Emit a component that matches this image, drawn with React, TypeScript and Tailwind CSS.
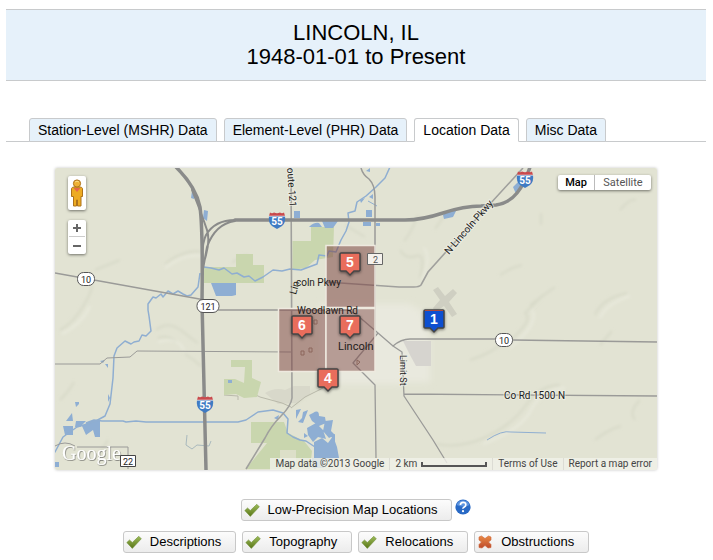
import React from "react";

const tabs = ["Station-Level (MSHR) Data", "Element-Level (PHR) Data", "Location Data", "Misc Data"];

const pins = [
  { label: "5", x: 350, y: 253 },
  { label: "6", x: 302, y: 316 },
  { label: "7", x: 350, y: 316 },
  { label: "4", x: 328, y: 369 },
];

const interstates = [
  { x: 277, y: 221 },
  { x: 525, y: 180 },
  { x: 205, y: 405 },
];

const routes = [
  { label: "10", x: 86, y: 279, w: 17 },
  { label: "121", x: 208, y: 306, w: 22 },
  { label: "10", x: 504, y: 340, w: 17 },
];

function Tick() {
  return (
    <svg viewBox="0 0 16 16" className="size-4 shrink-0" aria-hidden="true">
      <defs>
        <linearGradient id="tick" x1="0" y1="0" x2="0" y2="1">
          <stop offset="0" stopColor="#9dbb59" />
          <stop offset="1" stopColor="#5a7717" />
        </linearGradient>
      </defs>
      <path d="M.8 8.600 3.500 6l2.800 2.500 6.500-6.200 2.500 2.500L6.300 14.400Z" fill="url(#tick)" stroke="#71903a" strokeWidth=".6" />
    </svg>
  );
}

function Cross() {
  return (
    <svg viewBox="0 0 16 16" className="size-4 shrink-0" aria-hidden="true">
      <defs>
        <linearGradient id="cross" x1="0" y1="0" x2="0" y2="1">
          <stop offset="0" stopColor="#ea8b45" />
          <stop offset="1" stopColor="#bd4a2c" />
        </linearGradient>
      </defs>
      <path
        d="M2 3 4.500 2 8 4.500 11.500 2 14 3v3L11.500 8l2.500 2.500v3l-3 .5-3-2.500L5 14l-3-.5v-3L4.500 8 2 6Z"
        fill="url(#cross)"
        stroke="#cc6337"
        strokeWidth=".6"
      />
    </svg>
  );
}

function LayerButton({ label, on = true }: { label: string; on?: boolean }) {
  return (
    <button
      type="button"
      aria-pressed={on}
      className="flex h-[22px] items-center gap-2 rounded-[3px] border border-[#c8c8c8] bg-gradient-to-b from-[#fcfcfc] to-[#ececec] pr-[14px] pl-[2px] text-[13px] leading-5 whitespace-nowrap text-black"
    >
      {on ? <Tick /> : <Cross />}
      {label}
    </button>
  );
}

function Shield({ x, y }: { x: number; y: number }) {
  return (
    <g transform={`translate(${x} ${y})`}>
      <path d="M-7-8.500Q-5-7-3-8.500 0-7 3-8.500 5-7 7-8.500L8-5H-8Z" fill="#c94a4d" />
      <path d="M-8-5H8Q9 2 5 5L0 8-5 5Q-9 2-8-5Z" fill="#3f7bc3" />
      <path d="M-8-4.800H8" stroke="#f4eded" strokeWidth=".8" />
      <text y="4" textAnchor="middle" fontSize="10" fontWeight="700" fill="#fff">
        55
      </text>
    </g>
  );
}

function Pin({ x, y, label, color }: { x: number; y: number; label: string; color: string }) {
  return (
    <g transform={`translate(${x} ${y})`}>
      <path
        d="M-9 0H9Q10 0 10 1V17Q10 18 9 18H4L0 22-4 18H-9Q-10 18-10 17V1Q-10 0-9 0Z"
        fill={color}
        stroke="#454545"
        strokeWidth="1.500"
        filter="url(#pinShadow)"
      />
      <text
        y="14"
        textAnchor="middle"
        fontSize="14"
        fontWeight="700"
        fill="#fff"
        className="font-['Liberation_Sans',sans-serif]"
      >
        {label}
      </text>
    </g>
  );
}

function MapDrawing() {
  return (
    <svg
      viewBox="55 168 602 302"
      preserveAspectRatio="xMidYMid slice"
      className="block h-full w-full font-[Roboto,sans-serif]"
      role="img"
      aria-label="Map of station locations around Lincoln"
    >
      <defs>
        <filter id="soft">
          <feGaussianBlur stdDeviation="1.500" />
        </filter>
        <filter id="city" x="-20%" y="-20%" width="140%" height="140%">
          <feGaussianBlur stdDeviation="3" />
        </filter>
        <filter id="pinShadow" x="-30%" y="-30%" width="160%" height="160%">
          <feDropShadow dx="0" dy="1" stdDeviation="1.500" floodColor="#000" floodOpacity=".5" />
        </filter>
        <filter id="logoShadow" x="-20%" y="-20%" width="140%" height="150%">
          <feDropShadow dx=".6" dy=".8" stdDeviation=".7" floodColor="#444" floodOpacity=".7" />
        </filter>
      </defs>
      <rect x="55" y="168" width="602" height="302" fill="#e2e3d3" />

      {/* terrain */}
      <g fill="none" stroke="#d7d9c8" strokeWidth="2" filter="url(#soft)">
        <path d="M165 264q10-8 20-11t16-1M60 330q12-6 22-22t10-22M156 330q12-10 26 1t16 12M158 338q10-3 18 4M60 400q10-10 14-18M108 440l-9 14" />
        <path d="M185 354q8 5 16 12M400 250q6 10 16 6t4 22M418 215q-8 20-14 26M505 345q30-25 20-32l18-18" />
        <path d="M595 315q6-16 32-22M620 210q10-12 16-10M500 275q12-8 22-10M530 305l25-18M560 385q-20 0-34 20t-40 32-50 7M470 360q25-8 35-20" />
        <path d="M595 440q12-10 26-14M640 400q-12 12-5 20M600 345l12-14M541 225v-12M345 225l20 12M320 385l-26 20M232 263q8-7 16-8M120 260l-25 10M445 215l-10 14" />
      </g>
      <g fill="none" stroke="#e9eadd" strokeWidth="2" filter="url(#soft)">
        <path d="M165 268q20-15 38-12M158 342q20-6 26 8M424 248q8 10-2 32M510 348q30-25 22-38M565 388q-24 2-34 22t-48 34M62 334q20-10 28-28M630 296q-24 8-30 22" />
      </g>
      <g filter="url(#city)">
        <path d="M320 304H412V375L400 384H340L320 375Z" fill="#e9e9de" />
        <path d="M375 308H420L430 340V382H375Z" fill="#e9e9de" />
      </g>
      <path d="M403 341H431V366H416L410 355Z" fill="#d6d4cf" />
      <path d="M433 290l5-3 7 9 8-7 4 4-8 9 8 12-5 3-8-11-9 6-2-4 7-8Z" fill="#cfcfc2" />
      <path d="M265 393q10-6 20-3l9-4h16v8l-14 9-18 1Z" fill="#d8d8ca" />
      <path d="M240 391l10 1 10 5 22 6 9 4M291 408l14-11 22-11M224 395l14 1v4" fill="none" stroke="#b9b9aa" strokeWidth="1" />

      {/* parks */}
      <path
        d="M292.500 241h18.500v-14h23l-1 30-18 3-9 8-13.500 2ZM204 267h32v-13h17v11h11v18h-60ZM231 360h21v18l9 4-4 15-13 1-8-4-12 1v-16h11l9 4 1-16h-14ZM251 422h33l4 11 16 8 8 10-2 18h-64l21-26h-16Z"
        fill="#c9d6ae"
      />
      <path d="M280 450h16v12h-16Z" fill="#dcdfc8" />

      {/* water */}
      <g fill="#8eaed3">
        <path d="M211 283h25v12l-4 1h-16ZM294 211h6v7h-6ZM309 227q5-5 10-4l3 4h-12ZM322 221h16l-5 7h-8ZM204 210l4 1-1 10-4-3ZM366 210h6v7h-6ZM363 222h8v4h-8ZM376 223h4v3h-4ZM443 215l4-4h9l-3 6-9 2ZM366 171l4-3v4ZM369 197l4-3v5ZM360 200l5-2-4 5ZM192 191l3 1-1 7-3-1ZM513 187l6-6 3 5-6 8Z" />
        <path d="M66 421l6-8 1 8ZM63 426h10v9h-8ZM76 421h10l-6 6h-5ZM82 426l8-5h10v16h-5l-2-7-7 5ZM75 402h4v2l-3 3ZM108 394l2 4-2 4ZM100 361l5-1-2 3ZM105 364h3v4ZM55 462h4v5h-4Z" />
        <path d="M313 413q6-4 6 3l6 1 1 6-7 3-7-5-3-6ZM325 421l8-1-2 11 4 4-6 3-6-7ZM303 412l5-2-5 13-5-1 4-4ZM307 428l9-5 7 7 3 9-8-2-5 5-5-7ZM314 442l8-4 6 5 5-7 4 11 2 11-9 1h-16ZM296 410l5-1-5 10ZM274 418l5-3-1 5ZM304 433l4 3-4 2ZM331 436l4-2v9ZM312 458h12v10h-12ZM228 380h4v3h-4ZM220 288h6v2h-6Z" />
      </g>
      <g fill="none" stroke="#8faed1" strokeWidth="1.500" strokeLinejoin="round">
        <path d="M204 267l7 1 8 2 5-2 8 6 5-1 7 4 5-1 6 5 8-4 10-7 9 1 8-2 11 1 8-3 8-3 2-9 8 1 2-5 7 1 5-12 5-9 3-9-1-9 7-2 2-9 9-6 10-9 9-9 5-11" />
        <path d="M200 273l-2 14-7 8-4 1-4-2-5-3-5 3-5-3-5 6-2-3-5 4-3-1-5 7v6l1 6 2 15-5 5-4-1-3 6-5 1-3 2-6-3-8 7-3 8-1 22-3 26-5 12-11 6-17 5-14 10-8 15-17 8" />
        <path d="M86 423l8-3 8 1h21l3 1 10-1 10 1h92l8-2 12-8 15-2 10 3 5 6-1 14 6 4 7 3 6 1 9 6v22" />
        <path d="M487 440q15-10 24-8l35 1M368 201l9 5" strokeWidth="1" />
        <path d="M187 435l-1 10 6 4 5-4 12 1 2-5" strokeWidth="1" stroke="#a9b9bd" />
      </g>

      {/* roads */}
      <g fill="none" stroke="#9a9a98" strokeWidth="1.300" strokeLinejoin="round">
        <path d="M55 273l150 27M218 310h130l9 5 21 18 15 13q8-7 17-7h85M512 340l145 2" />
        <path d="M393 346l9 6 2 44 29 44 14 23M404 394l253 2M378 333l-25 30 22 22 1 73" />
        <path d="M55 364h45l7-6 23-1 7-6 154 1M77 447h51v22M55 446q10-6 20 0" strokeWidth="1" />
        <path d="M361 168q2 7 8 11 6 6 6 18v50M375 247v90" strokeWidth="1.500" />
      </g>
      <g fill="none" stroke="#a0a09d" strokeWidth="1.600">
        <path d="M291 168l1 230q-1 8-11 18t-16 22l-19 31" />
        <path d="M523 168l-78 85-17 19-7 13q-2 2-7 2h-15l-73-5" />
      </g>
      <g fill="none" stroke="#8a8b8a" strokeLinecap="round">
        <path d="M176 167q20 20 24 40 3 23 2 95l4 168" strokeWidth="3.500" />
        <path d="M192 190q10 25 15 40 4 12-4 35M360 220H235q-20 0-29 15-4 8-4 26M235 221q-20 3-28 26l-4 22" strokeWidth="2" />
        <path d="M235 220h170q17 0 38-7t38-7l15-1q13-2 21-12t13-26" strokeWidth="3.500" />
      </g>

      {/* low-precision areas */}
      <g stroke="#eee9df" strokeWidth="1.500" fill="#7b4240">
        <path d="M326 245.500h49V307.500h-49Z" fillOpacity=".52" />
        <path d="M278.500 308.500H326V371.500H278.500Z" fillOpacity=".5" />
        <path d="M326 308.500h49V371.500h-49Z" fillOpacity=".46" />
      </g>
      <path d="M301 351h3v4h-3ZM309 348h3v4h-3ZM314 320h3v4h-3ZM357 360l3 2-3 3Z" fill="none" stroke="#8c665c" />

      {/* shields */}
      {interstates.map((s) => (
        <Shield key={s.x} x={s.x} y={s.y} />
      ))}
      {routes.map((r) => (
        <g key={r.x}>
          <rect x={r.x - r.w / 2} y={r.y - 6.5} width={r.w} height="13" rx="6" fill="#fff" stroke="#555" />
          <text x={r.x} y={r.y + 3.5} textAnchor="middle" fontSize="9" fill="#222">
            {r.label}
          </text>
        </g>
      ))}
      <path d="M120.500 455.500h15v11h-15Z" fill="#fff" stroke="#444" />
      <text x="128" y="464.500" textAnchor="middle" fontSize="9" fill="#222">
        22
      </text>
      <path d="M367.500 253.500h15v11h-15Z" fill="#f4f1ec" stroke="#666" />
      <text x="375.500" y="262.500" textAnchor="middle" fontSize="9" fill="#555">
        2
      </text>

      {/* place names */}
      <g fill="#222" stroke="#f1f1e8" strokeWidth="2" strokeOpacity=".7" paintOrder="stroke" fontSize="10">
        <text transform="translate(287 168) rotate(86)">oute 121</text>
        <text transform="translate(449 255) rotate(-49)">N Lincoln Pkwy</text>
        <text transform="translate(400 355) rotate(90)">
          <tspan fontSize="9">Limit St</tspan>
        </text>
        <text x="504" y="399">
          Co Rd 1500 N
        </text>
      </g>
      <g fill="#241d1b" fontSize="10">
        <text x="296" y="286">
          coln Pkwy
        </text>
        <text transform="translate(296 295) rotate(-75)">Lin</text>
        <text x="297" y="314">
          Woodlawn Rd
        </text>
        <text x="338" y="350" fontSize="11">
          Lincoln
        </text>
      </g>

      {pins.map((p) => (
        <Pin key={p.label} x={p.x} y={p.y} label={p.label} color="#e96d5c" />
      ))}
      <Pin x={434} y={310} label="1" color="#0a4fd0" />
      <path d="M425 310.500h18" stroke="#a94b3c" />

      <text
        x="62"
        y="460"
        fontSize="20"
        fill="#fff"
        filter="url(#logoShadow)"
        className="font-['Liberation_Serif',serif]"
      >
        Google
      </text>
    </svg>
  );
}

function Pegman() {
  return (
    <svg viewBox="0 0 14 28" className="h-7 w-[14px]" aria-hidden="true">
      <path
        d="M1.500 9.500Q2 8 4 8h6q2 0 2.500 1.500v8H11V27H7.500v-6h-1v6H3.500v-9.500h-2Z"
        fill="#edab22"
        stroke="#ad721b"
      />
      <path d="M3.500 9h7L7 13Z" fill="#e6684a" />
      <circle cx="7" cy="4.500" r="3.600" fill="#efb133" stroke="#ad721b" />
      <path d="M5 3q2-1.500 4 0" stroke="#fbdc80" fill="none" />
    </svg>
  );
}

const panel = "rounded-[2px] bg-white shadow-[0_1px_3px_rgba(0,0,0,0.5)]";

export default function App() {
  return (
    <div className="bg-white pt-[9px] pr-[7px] pl-[6px] font-['Liberation_Sans',Arial,sans-serif] text-black">
      <header className="border-y border-[#c8cacc] bg-[#e6f1fa] pt-[11px] pb-[11px] text-center">
        <h1 className="text-[22px] leading-6">
          LINCOLN, IL
          <br />
          1948-01-01 to Present
        </h1>
      </header>

      <nav className="mt-[37px] flex gap-[7px] border-b border-[#c8cacc] pl-[23px]" role="tablist">
        {tabs.map((tab) => (
          <button
            key={tab}
            type="button"
            role="tab"
            aria-selected={tab === "Location Data"}
            className="-mb-px h-6 rounded-t-[3px] border border-[#c8cacc] bg-[#e6f1fa] px-2 text-[14px] leading-[22px] whitespace-nowrap aria-selected:border-b-white aria-selected:bg-white"
          >
            {tab}
          </button>
        ))}
      </nav>

      <main>
        <section className="relative mx-[49px] mt-[26px] h-[302px] overflow-hidden rounded-[2px] font-[Roboto,sans-serif] shadow-[0_0_3px_rgba(0,0,0,0.25)]">
          <MapDrawing />

          <div className="absolute top-2 left-[13px] flex flex-col gap-[10px]">
            <button type="button" aria-label="Street View" className={`flex h-[34px] w-[18px] items-center justify-center ${panel}`}>
              <Pegman />
            </button>
            <div className={`flex w-[18px] flex-col items-stretch px-px ${panel}`}>
              <button type="button" aria-label="Zoom in" className="flex h-[17px] items-center justify-center border-b border-[#ccc]">
                <svg viewBox="0 0 8 8" className="size-2" aria-hidden="true">
                  <path d="M0 4h8M4 0v8" stroke="#666" strokeWidth="2" />
                </svg>
              </button>
              <button type="button" aria-label="Zoom out" className="flex h-[17px] items-center justify-center">
                <svg viewBox="0 0 8 8" className="size-2" aria-hidden="true">
                  <path d="M0 4h8" stroke="#666" strokeWidth="2" />
                </svg>
              </button>
            </div>
          </div>

          <div className={`absolute top-[7px] right-[6px] flex text-[11px] leading-[15px] ${panel}`}>
            <button type="button" className="w-[37px] border-r border-[#bbb] font-medium text-black">
              Map
            </button>
            <button type="button" className="w-14 text-[#555]">
              Satellite
            </button>
          </div>

          <footer className="absolute right-0 bottom-0 flex h-3 items-center bg-[#f1f1ea]/80 text-[10px] leading-3 whitespace-nowrap text-[#444]">
            <span className="px-[5px]">Map data ©2013 Google</span>
            <span className="flex items-center gap-1 border-l border-[#dcdcd4] px-[5px]">
              2 km
              <span className="h-[5px] w-[66px] border-2 border-t-0 border-[#555]" />
            </span>
            <a href="#terms" className="border-l border-[#dcdcd4] px-[5px]">
              Terms of Use
            </a>
            <a href="#report" className="border-l border-[#dcdcd4] px-[5px]">
              Report a map error
            </a>
          </footer>
        </section>

        <section className="mt-[29px] flex flex-col items-center gap-[10px]">
          <div className="flex items-start gap-[3px]">
            <LayerButton label="Low-Precision Map Locations" />
            <button type="button" aria-label="Help">
              <svg viewBox="0 0 16 16" className="size-4" aria-hidden="true">
                <circle cx="8" cy="8" r="7.600" fill="#2869c5" />
                <path d="M1.500 6a7 7 0 0 1 13 0Q9 9 1.500 6Z" fill="#5c94df" />
                <path d="M5.400 6q0-2.700 2.700-2.700t2.700 2.400q0 1.500-1.500 2.300T8 9.700" fill="none" stroke="#fff" strokeWidth="1.700" />
                <circle cx="8" cy="12.200" r="1.100" fill="#fff" />
              </svg>
            </button>
          </div>
          <div className="flex gap-[6px]">
            <LayerButton label="Descriptions" />
            <LayerButton label="Topography" />
            <LayerButton label="Relocations" />
            <LayerButton label="Obstructions" on={false} />
          </div>
        </section>
      </main>
    </div>
  );
}
